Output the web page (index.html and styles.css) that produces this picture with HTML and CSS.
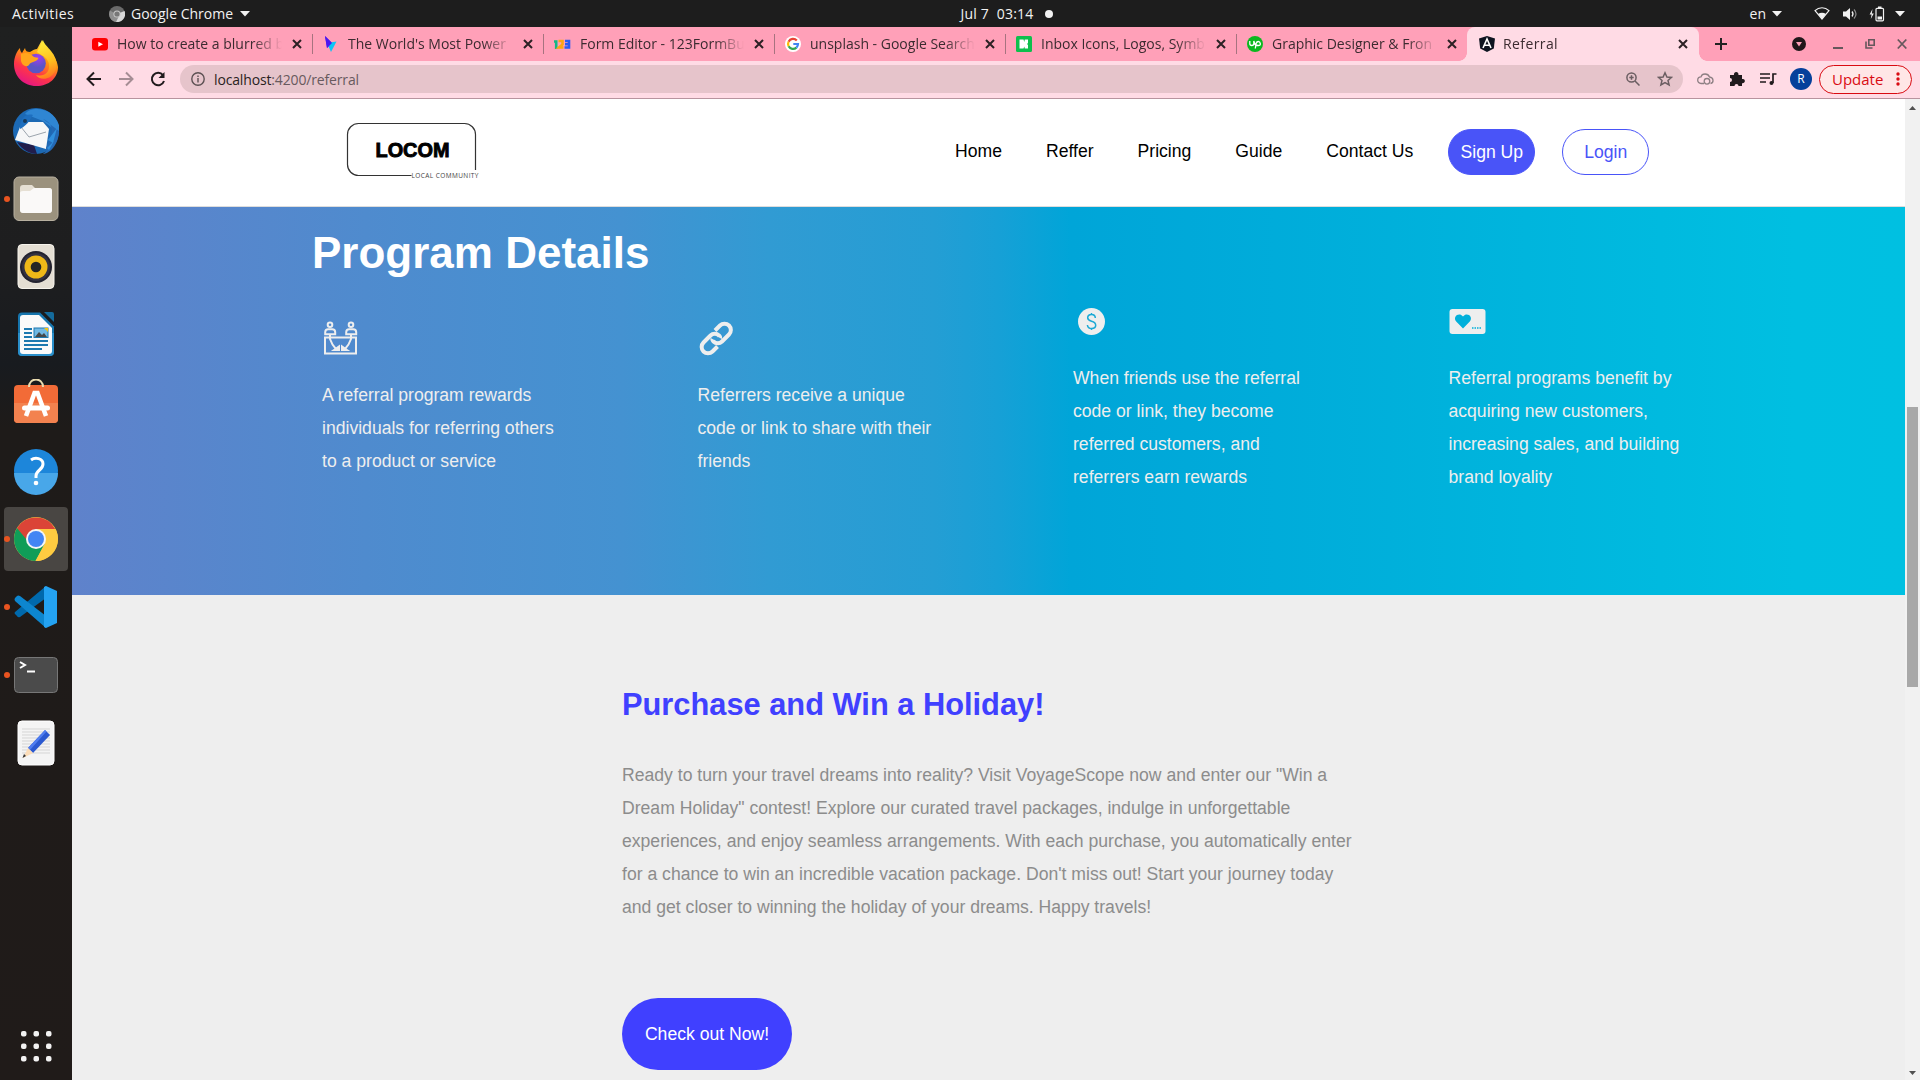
FILE: index.html
```html
<!DOCTYPE html>
<html lang="en">
<head>
<meta charset="utf-8">
<title>Referral</title>
<link rel="stylesheet" href="styles.css">
</head>
<body>
<div class="desktop">
  <header class="topbar">
    <div class="topbar-left">
      <span class="activities">Activities</span>
      <svg class="app-icon" width="16" height="16" viewBox="0 0 16 16"><circle cx="8" cy="8" r="8" fill="#6b6b6b"/><path d="M8 8 15.500 5A8 8 0 0 1 7 16z" fill="#d8d8d8"/><path d="M1 4.500A8 8 0 0 0 7 16L10 10z" fill="#8f8f8f"/><circle cx="8" cy="8" r="3.600" fill="#c9c9c9"/><circle cx="8" cy="8" r="2.600" fill="#777"/></svg>
      <span class="app-name">Google Chrome</span>
      <svg class="caret" width="10" height="6"><path d="M0 0h10L5 5.500z" fill="#f2f2f2"/></svg>
    </div>
    <div class="clock"><span>Jul 7&nbsp; 03:14</span><i class="notice"></i></div>
    <div class="tray">
      <span class="lang">en</span>
      <svg class="caret" width="10" height="6"><path d="M0 0h10L5 5.500z" fill="#f2f2f2"/></svg>
      <svg class="wifi" width="16" height="13" viewBox="0 0 16 13"><path d="M1 3.600C5-.2 11-.2 15 3.600L8 12z" fill="none" stroke="#f2f2f2" stroke-width="1.200"/><path d="M4 7c2.500-1.800 5.500-1.800 8 0l-4 5z" fill="#f2f2f2"/></svg>
      <svg class="sound" width="16" height="14" viewBox="0 0 16 14"><path d="M1 4.500h3L8 1v12L4 9.500H1z" fill="#f2f2f2"/><path d="M10 4.500q2 2.500 0 5" fill="none" stroke="#f2f2f2" stroke-width="1.300"/><path d="M12 2.500q4 4.500 0 9" fill="none" stroke="#8a8a8a" stroke-width="1.200"/></svg>
      <svg class="battery" width="16" height="16" viewBox="0 0 16 16"><path d="M3.500 3 .6 8.500h2L1.800 13l3-5.500h-2z" fill="#f2f2f2"/><rect x="7" y="2.300" width="7.500" height="12.500" rx="1" fill="none" stroke="#f2f2f2" stroke-width="1.200"/><path d="M9 .5h3.500v1.500H9zM8.500 10.500H13v3H8.500z" fill="#f2f2f2"/></svg>
      <svg class="caret" width="10" height="6"><path d="M0 0h10L5 5.500z" fill="#f2f2f2"/></svg>
    </div>
  </header>

  <nav class="dock">
    <div class="slot"><svg width="48" height="48" viewBox="0 0 48 48">
      <defs>
        <linearGradient id="fx" x1=".8" y1="0" x2=".3" y2="1"><stop offset="0" stop-color="#fff44f"/><stop offset=".4" stop-color="#ff980e"/><stop offset=".7" stop-color="#ff3647"/><stop offset="1" stop-color="#e31587"/></linearGradient>
        <linearGradient id="fy" x1=".3" y1="0" x2=".5" y2="1"><stop offset="0" stop-color="#fff13d"/><stop offset=".6" stop-color="#ffbd1e"/><stop offset="1" stop-color="#ff7a20"/></linearGradient>
        <radialGradient id="fp" cx=".6" cy=".2"><stop offset="0" stop-color="#a13cf2"/><stop offset="1" stop-color="#5a55c5"/></radialGradient>
      </defs>
      <path d="M8 9c0 3 1 4 2 5l3-5c.5 3 2 4 5 4 3-2 5-3 7-3l5-9c1 4 4 6 6 9l1 2c4 4 8 8 9 16C46 39 37 47 24.500 47 11 47 2 37 2 25 2 18 5 12 8 9z" fill="url(#fx)"/>
      <path d="M31 1c1 4 5 7 8 11 8 9 7 21-1 26-5 3-12 2-14-2 8 2 14-2 13-11-1-6-6-8-12-12z" fill="url(#fy)"/>
      <circle cx="24" cy="24.500" r="9.800" fill="url(#fp)"/>
      <path d="M9 15c5-2 9-1 13 3 3 1 5 0 4 2-3 4-7 2-9 6-3 3-7 0-8-4z" fill="#ffa51c"/>
    </svg></div>
    <div class="slot"><svg width="48" height="48" viewBox="0 0 48 48">
      <circle cx="24" cy="24" r="23" fill="#1c69b4"/><path d="M5 35c5 8 13 12 20 12L22 38z" fill="#211d4b"/>
      <path d="M13 7C18-1 41-1 47 18v8L31 14z" fill="#2f86d3"/>
      <path d="M8 20l8-5h15l6 7-3 20L3 33z" fill="#f6f7f8"/><path d="M9 20l8 10 17-5" fill="none" stroke="#9ba4ad"/>
      <path d="M31 12c10 4 12 12 3 29 2 3-2 5-3 6 9-1 16-12 16-23z" fill="#2469b5"/><path d="M8 19c1-8 6-13 13-11-3 4-4 9-13 14z" fill="#1e6fbf"/><circle cx="13" cy="14" r="2" fill="#173a5c"/><path d="M36 33l9-12-4 15zM35 41l7-7-5 9z" fill="#2f8fdc"/>
    </svg></div>
    <div class="slot running"><svg width="48" height="48" viewBox="0 0 48 48">
      <rect x="2" y="2" width="44" height="43.500" rx="5" fill="#9b927e" stroke="#b8b0a0"/><path d="M8 13q0-3 3-3h9l3 3h14q3 0 3 3v18q0 4-4 4H12q-4 0-4-4z" fill="#e6e0d4"/><path d="M8 18q0-2 3-2h7l4-3h15q3 0 3 3v19q0 3-3 3H11q-3 0-3-3z" fill="#faf9f8"/>
    </svg></div>
    <div class="slot"><svg width="48" height="48" viewBox="0 0 48 48">
      <rect x="6" y="1.500" width="36" height="44" rx="4" fill="#e4ded3" stroke="#f6f3ec"/><circle cx="24" cy="24" r="16" fill="#23222f"/><circle cx="24" cy="24" r="14" fill="#343241"/><circle cx="24" cy="24" r="11.500" fill="#efb818"/><circle cx="24" cy="24" r="5.300" fill="#252525"/>
    </svg></div>
    <div class="slot"><svg width="48" height="48" viewBox="0 0 48 48">
      <path d="M10 1.500h18l14 14V41q0 4-4 4H10q-4 0-4-4V5.500q0-4 4-4z" fill="#1675ad"/><path d="M6 22h36v19q0 4-4 4H10q-4 0-4-4z" fill="#2a8fca"/><path d="M11 4h16l13 13v23q0 3-3 3H11q-3 0-3-3V7q0-3 3-3z" fill="#fafafa"/><path d="M32 1h8q2 0 2 2v8z" fill="#146b9c"/>
      <path d="M12 18h8M12 22h8M12 26h8M12 30h24M12 34h24M12 38h18" stroke="#1d79b0" stroke-width="2"/><rect x="22" y="17" width="14" height="9.500" fill="#71b9e4" stroke="#1d79b0"/><path d="M23 26l4-5 3 3 2-2 3 4z" fill="#46494a"/><path d="M32 17h4v4z" fill="#f2c511"/>
    </svg></div>
    <div class="slot"><svg width="48" height="48" viewBox="0 0 48 48">
      <rect x="2" y="6" width="44" height="38" rx="4" fill="#f26b37"/><path d="M2 24h44v16q0 4-4 4H6q-4 0-4-4z" fill="#f3824f"/><path d="M17 8c0-10 14-10 14 0" fill="none" stroke="#eadcb0" stroke-width="2"/>
      <path d="M14 37l8.500-23h3L34 37" fill="none" stroke="#fff" stroke-width="4.500"/><rect x="10" y="26.500" width="28" height="5" rx="2.500" fill="#fff"/>
    </svg></div>
    <div class="slot"><svg width="48" height="48" viewBox="0 0 48 48">
      <circle cx="24" cy="24" r="22" fill="#1d86da"/><path d="M2 26h44a22 22 0 0 1-44 0z" fill="#48a7e9"/><path d="M19 13c4-3 12-2 12 4 0 6-7 6-7 12v2" fill="none" stroke="#fff" stroke-width="3"/><circle cx="24" cy="36" r="2.300" fill="#fff"/>
    </svg></div>
    <div class="slot running active"><svg width="48" height="48" viewBox="0 0 48 48">
      <circle cx="24" cy="24" r="22" fill="#fecb41"/><path d="M5 13A22 22 0 0 1 43.200 14H24L14 29z" fill="#db4437"/><path d="M5 13A22 22 0 0 0 23.500 46L33 29 24 24H14z" fill="#109d58"/><path d="M24 14h19.500A22 22 0 0 1 23.500 46L33 28z" fill="#fecb41"/><circle cx="24" cy="24" r="10" fill="#f5f5f5"/><circle cx="24" cy="24" r="8" fill="#4285f4"/>
    </svg></div>
    <div class="slot running"><svg width="48" height="48" viewBox="0 0 48 48">
      <path d="M34 3v12L8 34q-2 1-3-1l-2-2q-1-1 0-2z" fill="#0069ac"/><path d="M34 45V33L8 13q-2-1-3 0l-2 2q-1 1 0 3z" fill="#0d86cf"/><path d="M34 3l11 5v32l-11 5-2-1V4z" fill="#24a3f2"/>
    </svg></div>
    <div class="slot running"><svg width="48" height="48" viewBox="0 0 48 48">
      <rect x="2.500" y="6.500" width="43" height="35" rx="4" fill="#4b4b4b" stroke="#777"/><path d="M8 11l5 3-5 3" fill="none" stroke="#fff" stroke-width="2"/><path d="M15 20.500h8" stroke="#fff" stroke-width="2"/>
    </svg></div>
    <div class="slot"><svg width="48" height="48" viewBox="0 0 48 48">
      <rect x="6" y="2" width="36" height="44" rx="4" fill="#f4f4f4" stroke="#fff"/><path d="M10 10h28M10 13h28M10 16h28M10 19h28M10 22h28M10 25h28M10 28h28M10 31h28M10 34h28" stroke="#d5d5d5"/><path d="M33 11l5 5-17 18-5-5z" fill="#2b59d0"/><path d="M33 11l1.500 1.500L18 31l-2-2z" fill="#4f7df0"/><path d="M16 29l5 5-10 5z" fill="#fbdcb8"/><path d="M12 35l2 2-3.500 2z" fill="#333"/>
    </svg></div>
    <div class="slot apps"><svg width="48" height="48" viewBox="0 0 48 48" fill="#f2f2f2"><rect x="9" y="9" width="5.500" height="5.500" rx="2"/><rect x="21.500" y="9" width="5.500" height="5.500" rx="2"/><rect x="34" y="9" width="5.500" height="5.500" rx="2"/><rect x="9" y="21.500" width="5.500" height="5.500" rx="2"/><rect x="21.500" y="21.500" width="5.500" height="5.500" rx="2"/><rect x="34" y="21.500" width="5.500" height="5.500" rx="2"/><rect x="9" y="34" width="5.500" height="5.500" rx="2"/><rect x="21.500" y="34" width="5.500" height="5.500" rx="2"/><rect x="34" y="34" width="5.500" height="5.500" rx="2"/></svg></div>
  </nav>

  <main class="browser">
    <div class="tabstrip">
      <div class="tab"><svg width="16" height="16"><rect y="2" width="16" height="12.500" rx="3" fill="#f00"/><path d="M6.300 5.700v5L11 8.200z" fill="#fff"/></svg><span class="title">How to create a blurred b</span><svg class="x" width="10" height="10"><path d="M1 1l8 8M9 1L1 9"/></svg></div>
      <div class="tab"><svg width="16" height="16"><path d="M2 0l7 7-5 5z" fill="#4b17f0"/><path d="M4 7l9.500-1.500L8 16z" fill="#0bc5f5"/><path d="M2 0l7 7-5 5z" fill="#4b17f0"/></svg><span class="title">The World's Most Power</span><svg class="x" width="10" height="10"><path d="M1 1l8 8M9 1L1 9"/></svg></div>
      <div class="tab"><svg width="17" height="16" fill="none" stroke-width="2.600"><path d="M0 5.500h2.200V13" stroke="#13b884"/><path d="M4.500 5h4v3.500l-3.500 3h4.500" stroke="#fca613"/><path d="M11 5h4v6.500h-4.500M11 8.200h4" stroke="#285cf4"/></svg><span class="title">Form Editor - 123FormBu</span><svg class="x" width="10" height="10"><path d="M1 1l8 8M9 1L1 9"/></svg></div>
      <div class="tab"><svg width="16" height="16" fill="none" stroke-width="2.200"><circle cx="8" cy="8" r="8" fill="#fff"/><path d="M11.800 4.500A5 5 0 0 0 3.600 5.700" stroke="#ea4335"/><path d="M3.600 5.700a5 5 0 0 0 0 4.600" stroke="#fbbc05"/><path d="M3.600 10.300a5 5 0 0 0 7.800 1.300" stroke="#34a853"/><path d="M11.400 11.600A5 5 0 0 0 13 8H8.300" stroke="#4285f4"/></svg><span class="title">unsplash - Google Search</span><svg class="x" width="10" height="10"><path d="M1 1l8 8M9 1L1 9"/></svg></div>
      <div class="tab"><svg width="16" height="16"><rect width="16" height="16" rx="1.500" fill="#0ebf4d"/><path d="M3.500 3.500h4l.8 2.500.5-2.500H12v3.500l-1 1 1 1v3.500H8.800l-.5-2-.8 2h-4z" fill="#fff"/></svg><span class="title">Inbox Icons, Logos, Symb</span><svg class="x" width="10" height="10"><path d="M1 1l8 8M9 1L1 9"/></svg></div>
      <div class="tab last"><svg width="16" height="16"><circle cx="8" cy="8" r="8" fill="#0bb81f"/><path d="M2.800 5v2.500q0 2 2 2t2-2V5q1 4 2.700 5M8.300 12.500l.8-5q.6-2 2.200-2t2 2-2 2-2.600-1" fill="none" stroke="#fff" stroke-width="1.300"/></svg><span class="title">Graphic Designer &amp; Fron</span><svg class="x" width="10" height="10"><path d="M1 1l8 8M9 1L1 9"/></svg></div>
      <div class="tab current"><svg width="16" height="16"><path d="M8 0l8 2.500-1.200 10L8 16l-6.800-3.500L0 2.500z" fill="#0e1420"/><path d="M4 12L8 3l4 9M5.500 9.200h5" fill="none" stroke="#fff" stroke-width="1.600"/></svg><span class="title">Referral</span><svg class="x" width="10" height="10"><path d="M1 1l8 8M9 1L1 9"/></svg></div>
      <svg class="plus" width="12" height="12"><path d="M6 0v12M0 6h12" stroke="#222" stroke-width="2"/></svg>
      <div class="window-controls">
        <svg width="14" height="14"><circle cx="7" cy="7" r="7" fill="#20171a"/><path d="M4 5h6l-3 4.500z" fill="#ffa0b8"/></svg>
        <svg width="10" height="14"><path d="M0 11h10" stroke="#66575c" stroke-width="2"/></svg>
        <svg width="10" height="14" fill="none" stroke="#66575c" stroke-width="1.600"><path d="M3.800 2.800h5.400v5.400H3.800z"/><path d="M1 4.500V11h6.500"/></svg>
        <svg width="10" height="14"><path d="M.8 2.500l8.500 9M9.300 2.500l-8.500 9" stroke="#66575c" stroke-width="1.800"/></svg>
      </div>
    </div>

    <div class="toolbar">
      <div class="history">
        <svg width="16" height="16" fill="none" stroke="#211b1d" stroke-width="2"><path d="M15 8H2M8 1.500L1.500 8 8 14.500"/></svg>
        <svg width="16" height="16" fill="none" stroke="#a58d94" stroke-width="2"><path d="M1 8h13M8 1.500L14.500 8 8 14.500"/></svg>
        <svg width="16" height="16" fill="none" stroke="#211b1d" stroke-width="2"><path d="M13 4.200A6.200 6.200 0 1 0 14 10"/><path d="M14.500 1v6h-6z" fill="#211b1d" stroke="none"/></svg>
      </div>
      <div class="omnibox">
        <svg width="14" height="14" fill="none" stroke="#5c5053" stroke-width="1.400"><circle cx="7" cy="7" r="6.200"/><path d="M7 6v4.500M7 3.500V5"/></svg>
        <span class="url">localhost<em>:4200/referral</em></span>
        <svg class="magnify" width="14" height="14" fill="none" stroke="#6b5e62" stroke-width="1.500"><circle cx="5.500" cy="5.500" r="4.600"/><path d="M9 9l4.500 4.500M5.500 3.300v4.400M3.300 5.500h4.400"/></svg>
        <svg width="16" height="16" viewBox="0 0 16 16" fill="none" stroke="#6b5e62" stroke-width="1.500"><path d="M8 1.800l1.900 4.200 4.600.4-3.500 3 1.100 4.500L8 11.500l-4.100 2.400L5 9.400l-3.500-3L6.100 6z"/></svg>
      </div>
      <div class="extensions">
        <svg width="17" height="14" fill="none" stroke="#8d7f83" stroke-width="1.300"><path d="M7 11.500H4a3.300 3.300 0 0 1 0-6.600C5 1 11 1 12.500 5c4.500.5 4.500 6 1 6.500"/><circle cx="10" cy="9.300" r="2.800"/></svg>
        <svg width="16" height="16" fill="#211b1d"><path d="M1 4h4a2.300 2.300 0 1 1 4.400 0H13v4a2.200 2.200 0 1 1 0 4.200V15H9.500a2 2 0 0 0-4 0H1v-4a2 2 0 0 0 0-4z"/></svg>
        <svg width="17" height="14" fill="none" stroke="#211b1d" stroke-width="1.700"><path d="M0 2h10M0 6h10M0 10h6M13 11V2h3.500"/><circle cx="11.500" cy="11" r="2" fill="#211b1d" stroke="none"/></svg>
        <span class="avatar">R</span>
        <span class="update"><span>Update</span><svg width="4" height="14" fill="#d90b12"><circle cx="2" cy="2" r="1.700"/><circle cx="2" cy="7" r="1.700"/><circle cx="2" cy="12" r="1.700"/></svg></span>
      </div>
    </div>

    <div class="viewport">
      <div class="page">
        <div class="navbar">
          <svg class="logo" width="136" height="60" viewBox="0 0 136 60"><path d="M65.500 54.500H12.500a11 11 0 0 1-11-11V13.500a11 11 0 0 1 11-11H118.500a11 11 0 0 1 11 11V49" fill="none" stroke="#333" stroke-width="1.200"/><text x="29.500" y="35.500" class="logo-name" textLength="74" lengthAdjust="spacingAndGlyphs">LOCOM</text><text x="65.500" y="56.500" class="logo-sub" textLength="67">LOCAL COMMUNITY</text></svg>
          <div class="links"><a>Home</a><a>Reffer</a><a>Pricing</a><a>Guide</a><a>Contact Us</a></div>
          <div class="auth"><a class="signup">Sign Up</a><a class="login">Login</a></div>
        </div>

        <section class="program">
          <h1>Program Details</h1>
          <div class="cards">
            <div class="card low"><svg width="36" height="36" fill="none" stroke="#eee" stroke-width="2"><circle cx="8" cy="4.800" r="2.300"/><circle cx="29" cy="4.800" r="2.300"/><path d="M3.200 14.300v-2q0-3 3-3h4q3 0 3 3v2zM24.200 14.300v-2q0-3 3-3h4q3 0 3 3v2zM3 17.500h31v16H3zM8 15v4q2 6 6 10M29 15v4q-2 6-6 10"/><path d="M12 30l5-3.500V30zM25 30l-5-3.500V30z"/></svg><p>A referral program rewards individuals for referring others to a product or service</p></div>
            <div class="card low"><svg width="38" height="36" viewBox="1 0 38 36" fill="none" stroke="#eee" stroke-width="4"><path d="M18 10.500l5-5a6.300 6.300 0 0 1 9 9L25 21.500a6 6 0 0 1-8.500 0q-1.500-1.500-1-2.500"/><path d="M20.500 26.500l-5 5a6.300 6.300 0 0 1-9-9L13.500 15.500a6 6 0 0 1 8.500 0q1.500 1.500 1 2.500"/></svg><p>Referrers receive a unique code or link to share with their friends</p></div>
            <div class="card"><svg width="38" height="36"><circle cx="18.500" cy="18.500" r="13.500" fill="#eee"/><path d="M22.300 15q0-3.500-3.800-3.500t-3.800 3.300q0 2.400 3.800 3.500 4.200 1.200 4.200 4 0 3.200-4 3.200t-4.300-3.500M18.500 10v1.500M18.500 25.500v1.500" fill="none" stroke="#1ba9d5" stroke-width="1.500"/></svg><p>When friends use the referral code or link, they become referred customers, and referrers earn rewards</p></div>
            <div class="card"><svg width="38" height="36"><rect x=".5" y="6" width="36" height="25" rx="3" fill="#eee"/><path d="M14 25.500l-6.800-7c-4-5 3-10 6.800-5 3.800-5 10.800 0 6.800 5z" fill="#00b0db"/><path d="M23 25h9" stroke="#00b0db" stroke-width="1.300" stroke-dasharray="1.500 1"/></svg><p>Referral programs benefit by acquiring new customers, increasing sales, and building brand loyality</p></div>
          </div>
        </section>

        <section class="holiday">
          <h2>Purchase and Win a Holiday!</h2>
          <p>Ready to turn your travel dreams into reality? Visit VoyageScope now and enter our "Win a Dream Holiday" contest! Explore our curated travel packages, indulge in unforgettable experiences, and enjoy seamless arrangements. With each purchase, you automatically enter for a chance to win an incredible vacation package. Don't miss out! Start your journey today and get closer to winning the holiday of your dreams. Happy travels!</p>
          <a class="checkout">Check out Now!</a>
        </section>
      </div>
      <div class="scrollbar">
        <svg width="7" height="4"><path d="M3.500 0L7 4H0z" fill="#505050"/></svg>
        <i class="thumb"></i>
        <svg width="7" height="4"><path d="M3.500 4L7 0H0z" fill="#505050"/></svg>
      </div>
    </div>
  </main>
</div>
</body>
</html>
```
FILE: styles.css
```css
* { box-sizing: border-box; }
body { margin: 0; font-family: "Open Sans", "Noto Sans", sans-serif; overflow: hidden; }
svg { flex: none; display: block; }
h1, h2, p { margin: 0; }

.desktop {
  width: 1920px;
  height: 1080px;
  display: grid;
  grid-template-columns: 72px 1848px;
  grid-template-rows: 27px 1053px;
}

/* system bar */
.topbar {
  grid-column: 1 / 3;
  display: grid;
  grid-template-columns: 1fr auto 1fr;
  align-items: center;
  background: #1d1d1d;
  color: #f2f2f2;
  font-size: 14px;
  line-height: 27px;
}
.topbar-left { display: flex; align-items: center; padding-left: 12px; }
.activities { width: 97px; letter-spacing: 0.45px; }
.app-name { margin-left: 6px; width: 103px; white-space: nowrap; }
.caret { margin-left: 6px; }
.clock { display: flex; align-items: center; gap: 12px; padding-left: 94px; letter-spacing: 0.2px; }
.notice { width: 8px; height: 8px; border-radius: 50%; background: #f2f2f2; }
.tray { display: flex; align-items: center; justify-content: flex-end; padding-right: 15px; }
.wifi { margin-left: 32px; }
.sound { margin-left: 12px; }
.battery { margin-left: 11px; }
.battery + .caret { margin-left: 10px; }

/* launcher */
.dock {
  display: flex;
  flex-direction: column;
  align-items: center;
  gap: 4px;
  padding: 4px 0 2px;
  background: linear-gradient(#1f2020 0, #1e1e1f 22%, #181b1f 32%, #1e1b19 38%, #201b19 100%);
}
.slot {
  width: 64px;
  height: 64px;
  position: relative;
  display: flex;
  align-items: center;
  justify-content: center;
  border-radius: 4px;
}
.slot.active { background: #494643; }
.running::before {
  content: "";
  position: absolute;
  left: 0;
  top: 29px;
  width: 6px;
  height: 6px;
  border-radius: 50%;
  background: #e95420;
}
.apps { margin-top: auto; }

/* browser chrome */
.browser { display: flex; flex-direction: column; }
.tabstrip {
  height: 34px;
  display: flex;
  align-items: center;
  background: #ffa0b8;
  padding-left: 10px;
}
.tab {
  width: 231px;
  height: 20px;
  display: flex;
  align-items: center;
  padding: 0 10px;
  border-right: 1px solid #a7737f;
  color: #3c2b30;
  font-size: 14px;
}
.tab .title {
  flex: 1;
  margin: 0 10px 0 9px;
  padding-bottom: 2px;
  overflow: hidden;
  white-space: nowrap;
  -webkit-mask-image: linear-gradient(to right, #000 82%, transparent);
  mask-image: linear-gradient(to right, #000 82%, transparent);
}
.x path { stroke: #2c2024; stroke-width: 2; }
.tab.last { border: 0; width: 230px; }
.tab.current {
  position: relative;
  width: 232px;
  height: 34px;
  background: #ffdbe5;
  border: 0;
  border-radius: 8px 8px 0 0;
  padding: 0 11px 0 12px;
}
.tab.current .title { letter-spacing: 0.4px; margin-left: 8px; }
.tab.current::before, .tab.current::after {
  content: "";
  position: absolute;
  bottom: 0;
  width: 8px;
  height: 8px;
}
.tab.current::before { left: -8px; background: radial-gradient(circle at 0 0, transparent 7.5px, #ffdbe5 8px); }
.tab.current::after { right: -8px; background: radial-gradient(circle at 100% 0, transparent 7.5px, #ffdbe5 8px); }
.plus { margin-left: 16px; }
.window-controls { display: flex; align-items: center; margin-left: auto; gap: 22px; padding-right: 13px; }
.window-controls svg:first-child { margin-right: 5px; }

.toolbar {
  height: 38px;
  display: flex;
  align-items: center;
  background: #ffdbe5;
  border-bottom: 1px solid #b8949f;
  padding: 0 8px 1px 14px;
}
.history { display: flex; gap: 16px; }
.omnibox {
  width: 1503px;
  height: 28px;
  margin: 0 0 0 14px;
  border-radius: 14px;
  background: #e6c4cb;
  display: flex;
  align-items: center;
  padding: 0 10px 0 11px;
}
.url { margin-left: 9px; font-size: 14px; color: #291e21; flex: 1; white-space: nowrap; letter-spacing: -0.15px; }
.url em { font-style: normal; color: #685a5e; }
.magnify { margin-right: 17px; }
.extensions { display: flex; align-items: center; margin-left: auto; }
.extensions svg { margin-right: 15px; }
.extensions svg:nth-of-type(3) { margin-right: 13px; }
.avatar {
  width: 22px;
  height: 22px;
  margin-right: 7px;
  border-radius: 50%;
  background: #05409b;
  color: #fff;
  font-size: 12px;
  line-height: 22px;
  text-align: center;
}
.update {
  width: 93px;
  height: 29px;
  display: flex;
  align-items: center;
  justify-content: space-between;
  padding: 0 11px 0 12px;
  border: 1px solid #d90b12;
  border-radius: 15px;
  background: #ffe6e6;
  color: #d90b12;
  font-size: 15px;
}
.update svg { margin: 0; }

/* web page */
.viewport { flex: 1; display: flex; font-family: "Liberation Sans", Arial, sans-serif; font-size: 17.6px; }
.page { width: 1833px; background: #eee; }
.navbar {
  height: 108px;
  display: flex;
  align-items: center;
  background: #fff;
  border-bottom: 1px solid #ddd;
  padding-left: 274px;
}
.logo { margin-top: -4px; }
.logo-name { font: 900 20px "Liberation Sans", Arial, sans-serif; fill: #000; stroke: #000; stroke-width: 0.9px; }
.logo-sub { font: 6.5px "Open Sans", sans-serif; fill: #444; }
.links { display: flex; gap: 44px; margin-left: 473px; white-space: nowrap; margin-top: -3px; }
.auth { display: flex; gap: 27px; margin-left: 35px; margin-top: -2px; }
.auth a {
  width: 87px;
  height: 46px;
  border-radius: 23px;
  border: 1px solid #4954f8;
  line-height: 45px;
  text-align: center;
}
.signup { background: #4954f8; color: #fff; }
.login { color: #4954f8; }

.program {
  height: 388px;
  padding: 20px 0 0 240px;
  background: linear-gradient(to right, #5f82cb 0%, #4f8bce 16%, #4492d1 30%, #319bd3 38%, #249ed4 47%, #17a0d6 50.5%, #00a5d8 54.5%, #00b0db 72%, #00bfe1 94%, #00c0e1 100%);
}
.program h1 { color: #fff; font-size: 44px; line-height: 52px; }
.cards { display: grid; grid-template-columns: repeat(4, 375.5px); padding: 24px 0 0 10px; }
.card { width: 246px; color: #eee; line-height: 33px; }
.card p { margin-top: 23px; }
.card.low { padding-top: 17px; }

.holiday { padding: 89px 0 0 550px; }
.holiday h2 { color: #4040ff; font-size: 30.8px; line-height: 42px; }
.holiday p { width: 738px; margin-top: 33px; color: #8c8c8c; line-height: 33px; }
.checkout {
  display: block;
  width: 170px;
  height: 72px;
  margin-top: 74px;
  border-radius: 36px;
  background: #4040ff;
  color: #fff;
  line-height: 72px;
  text-align: center;
}
.scrollbar {
  width: 15px;
  background: #f1f1f1;
  display: flex;
  flex-direction: column;
  align-items: center;
  padding: 7px 0 5px;
}
.thumb { width: 11px; height: 280px; margin: 297px 0 auto; background: #a8a8a8; }
```
